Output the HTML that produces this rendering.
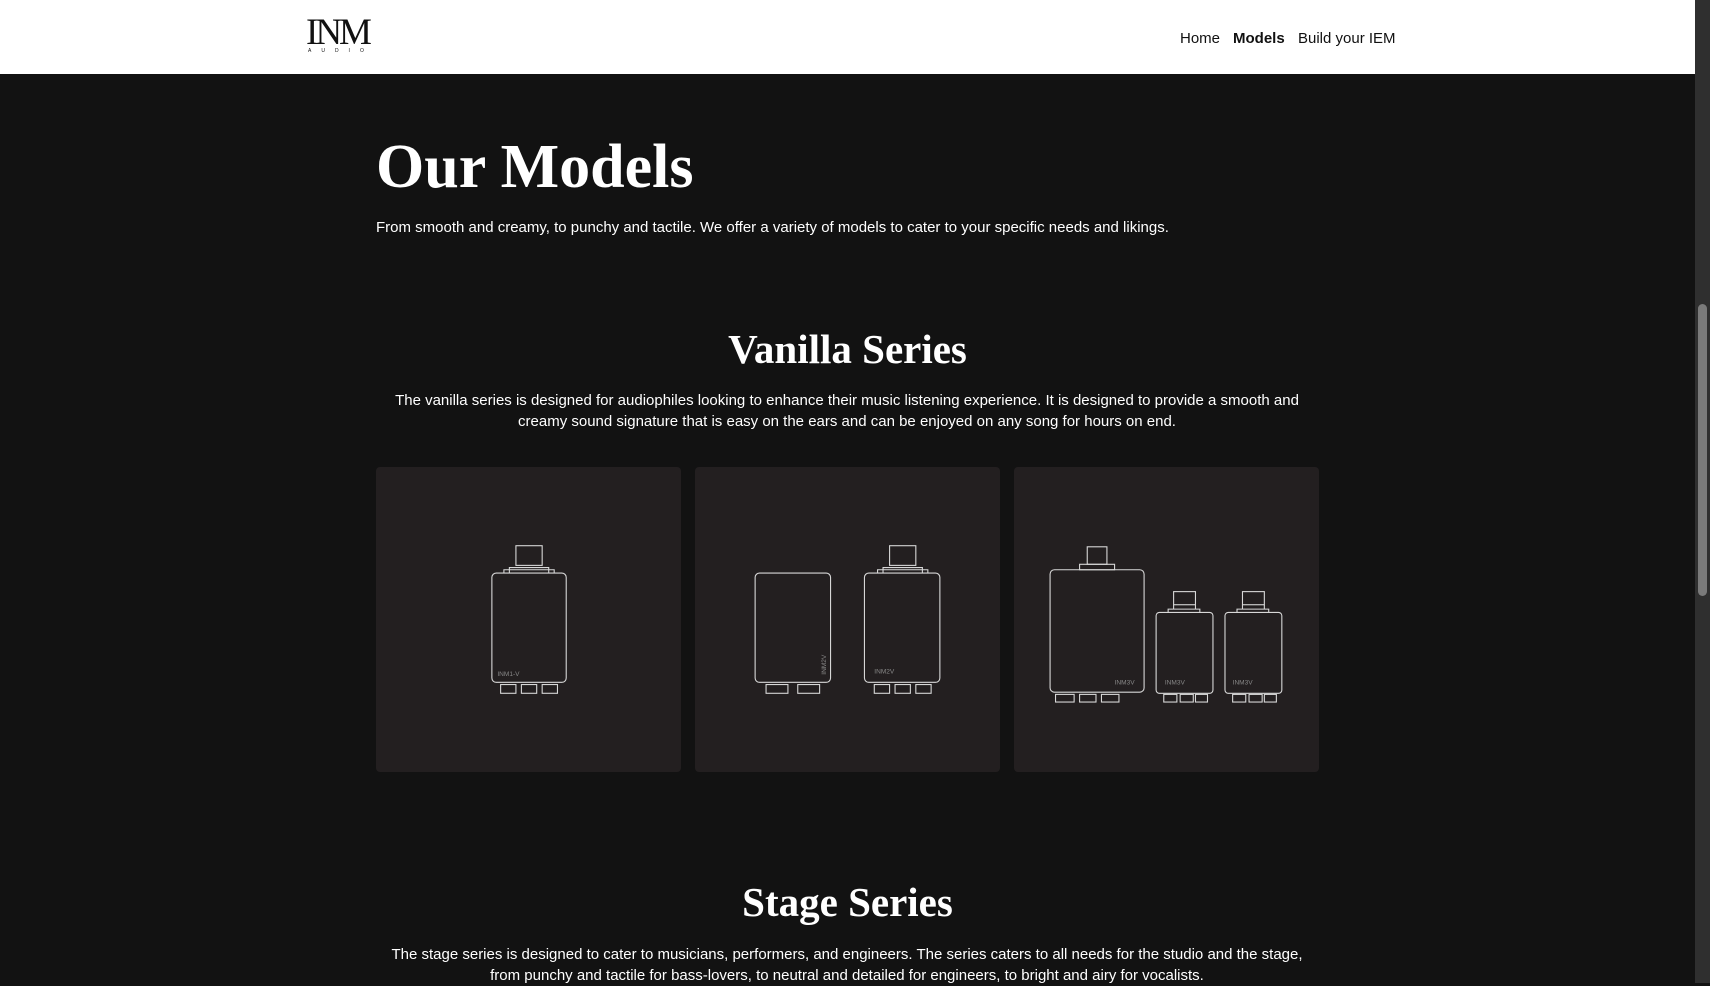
<!DOCTYPE html>
<html><head><meta charset="utf-8"><style>
*{margin:0;padding:0;box-sizing:border-box}
html,body{width:1710px;height:983px;overflow:hidden;background:#121212;font-family:"Liberation Sans",Arial,sans-serif;color:#fff}
.header{position:absolute;left:0;top:0;width:1695px;height:74px;background:#fff}
.logo{position:absolute;left:306px;top:14px;font-family:"Liberation Serif",serif;color:#111;font-size:37px;letter-spacing:-3px;line-height:37px}
.logo small{position:absolute;left:2px;top:35px;font-family:"Liberation Sans",sans-serif;font-size:5px;line-height:5px;letter-spacing:10px;color:#111}
.nav{position:absolute;top:30px;font-size:15px;color:#111}
.sb{position:absolute;left:1695px;top:0;width:15px;height:983px;background:#2f2f2f}
.thumb{position:absolute;left:1698px;top:304px;width:9px;height:292px;background:#7a7a7a;border-radius:5px}
h1{position:absolute;left:376px;top:127px;font-family:"Liberation Serif",serif;font-weight:bold;font-size:62px;line-height:80px}
.p{position:absolute;font-size:15px;line-height:21px}
h2{position:absolute;left:0;width:1695px;text-align:center;font-family:"Liberation Serif",serif;font-weight:bold;font-size:41px;line-height:50px}
.card{position:absolute;top:467px;width:305px;height:305px;background:#231f20;border-radius:4px}
.card svg{width:305px;height:305px;display:block}
</style></head><body>
<div class="header">
<div class="logo">INM<small>AUDIO</small></div>
<div class="nav" style="left:1180px">Home</div>
<div class="nav" style="left:1233px;font-weight:bold">Models</div>
<div class="nav" style="left:1298px">Build your IEM</div>
</div>
<h1>Our Models</h1>
<div class="p" style="left:376px;top:217px">From smooth and creamy, to punchy and tactile. We offer a variety of models to cater to your specific needs and likings.</div>
<h2 style="top:324px">Vanilla Series</h2>
<div class="p" style="left:376px;width:942px;top:390px;text-align:center">The vanilla series is designed for audiophiles looking to enhance their music listening experience. It is designed to provide a smooth and creamy sound signature that is easy on the ears and can be enjoyed on any song for hours on end.</div>

<div class="card" style="left:376px"><svg viewBox="0 0 279 279" fill="none" stroke="#d8d8d8" stroke-width="1">
<rect x="128" y="72" width="24" height="18"/><path d="M122 97V92h36v5M117 97v-3h46v3"/>
<rect x="106" y="97" width="68" height="100" rx="4"/>
<rect x="114" y="199" width="14" height="8"/><rect x="133" y="199" width="14" height="8"/><rect x="152" y="199" width="14" height="8"/>
<text x="111" y="191" fill="#888" stroke="none" font-size="6" font-family="Liberation Sans">INM1-V</text></svg></div>

<div class="card" style="left:695px"><svg viewBox="0 0 279 279" fill="none" stroke="#d8d8d8" stroke-width="1">
<rect x="55" y="97" width="69" height="100" rx="4"/>
<rect x="65" y="199" width="20" height="8"/><rect x="94" y="199" width="20" height="8"/>
<text transform="translate(120,190) rotate(-90)" fill="#888" stroke="none" font-size="6" font-family="Liberation Sans">INM2V</text>
<rect x="178" y="72" width="24" height="18"/><path d="M172 97V92h36v5M167 97v-3h46v3"/>
<rect x="155" y="97" width="69" height="100" rx="4"/>
<rect x="164" y="199" width="14" height="8"/><rect x="183" y="199" width="14" height="8"/><rect x="202" y="199" width="14" height="8"/>
<text x="164" y="189" fill="#888" stroke="none" font-size="6" font-family="Liberation Sans">INM2V</text></svg></div>

<div class="card" style="left:1014px"><svg viewBox="0 0 279 279" fill="none" stroke="#d8d8d8" stroke-width="1">
<rect x="67" y="73" width="18" height="16"/><rect x="60" y="89" width="32" height="5"/>
<rect x="33" y="94" width="86" height="112" rx="4"/>
<rect x="38" y="208" width="17" height="7"/><rect x="60" y="208" width="15" height="7"/><rect x="80" y="208" width="16" height="7"/>
<text x="92" y="199" fill="#888" stroke="none" font-size="6" font-family="Liberation Sans">INM3V</text>
<rect x="146" y="114" width="20" height="12"/><path d="M146 126v4h20v-4M141 133v-3h29v3"/>
<rect x="130" y="133" width="52" height="74" rx="3"/>
<rect x="137" y="208" width="12" height="7"/><rect x="152" y="208" width="12" height="7"/><rect x="166" y="208" width="11" height="7"/>
<text x="138" y="199" fill="#888" stroke="none" font-size="6" font-family="Liberation Sans">INM3V</text>
<rect x="209" y="114" width="20" height="12"/><path d="M209 126v4h20v-4M204 133v-3h29v3"/>
<rect x="193" y="133" width="52" height="74" rx="3"/>
<rect x="200" y="208" width="12" height="7"/><rect x="215" y="208" width="12" height="7"/><rect x="229" y="208" width="11" height="7"/>
<text x="200" y="199" fill="#888" stroke="none" font-size="6" font-family="Liberation Sans">INM3V</text></svg></div>

<h2 style="top:877px">Stage Series</h2>
<div class="p" style="left:376px;width:942px;top:944px;text-align:center">The stage series is designed to cater to musicians, performers, and engineers. The series caters to all needs for the studio and the stage, from punchy and tactile for bass-lovers, to neutral and detailed for engineers, to bright and airy for vocalists.</div>
<div class="sb"></div><div class="thumb"></div>
</body></html>
